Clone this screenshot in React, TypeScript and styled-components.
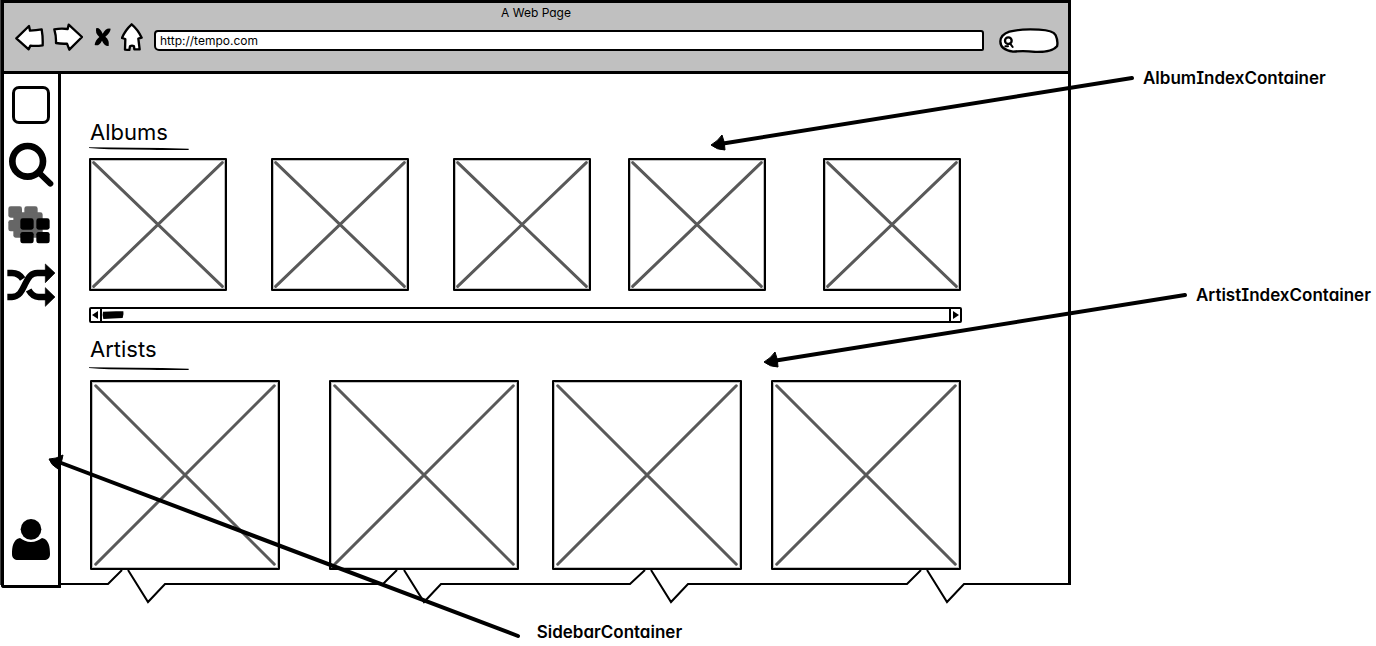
import React from "react";
import styled, { createGlobalStyle } from "styled-components";

const GlobalStyle = createGlobalStyle`
  *, *::before, *::after { box-sizing: border-box; }
  body {
    margin: 0;
    background: #fff;
    color: #000;
    font-family: Inter, "Liberation Sans", sans-serif;
    font-feature-settings: "cv11", "cv08";
  }
  button, input { font: inherit; font-feature-settings: inherit; color: inherit; }
`;

const Board = styled.div`
  position: relative;
  padding: 0 305px 61px 0;
`;

const BrowserWindow = styled.div`
  position: relative;
  border-left: 1px solid #444;
`;

const Chrome = styled.header`
  display: flex;
  flex-direction: column;
  height: 74px;
  background: #c0c0c0;
  border: 3px solid #000;
`;

const WindowTitle = styled.div`
  font-size: 12px;
  line-height: 20px;
  text-align: center;
`;

const Toolbar = styled.div`
  display: flex;
  align-items: center;
  padding: 0 9px 0 11px;
  height: 28px;
`;

const NavButtons = styled.nav`
  display: flex;
  align-items: center;
  gap: 9px;
  margin-right: 11px;
`;

const NavButton = styled.button`
  display: flex;
  padding: 0;
  border: 0;
  background: none;
`;

const AddressInput = styled.input`
  flex: 1;
  min-width: 0;
  height: 21px;
  margin-top: 7px;
  padding: 0 4px;
  border: 2px solid #000;
  border-radius: 4px 3px 2px 5px;
  background: #fff;
  font-size: 12px;
  line-height: 16px;
`;

const SearchField = styled.label`
  position: relative;
  display: flex;
  width: 60px;
  height: 25px;
  margin: 6px 0 0 15px;
`;

const SearchShape = styled.svg`
  position: absolute;
  inset: 0;
`;

const SearchInput = styled.input`
  position: relative;
  width: 100%;
  padding: 0 8px 0 16px;
  border: 0;
  background: transparent;
  font-size: 12px;
`;

const Body = styled.div`
  display: flex;
  align-items: flex-start;
`;

const Sidebar = styled.aside`
  display: flex;
  flex-direction: column;
  align-items: center;
  align-self: stretch;
  width: 60px;
  margin-bottom: -3px;
  padding: 12px 0 24px;
  border: 3px solid #000;
  border-top: 0;
  border-radius: 0 0 1px 3px;
  background: #fff;
`;

const SideButton = styled.button<{ $gap?: number; $last?: boolean }>`
  display: flex;
  padding: 0;
  border: 0;
  background: none;
  margin-top: ${(p) => (p.$last ? "auto" : `${p.$gap ?? 0}px`)};
`;

const BlankIcon = styled.span`
  width: 38px;
  height: 38px;
  border: 3px solid #000;
  border-radius: 7px;
`;

const Main = styled.main`
  flex: 1;
  min-width: 0;
  padding: 44px 107px 15px 28px;
  border-right: 3px solid #000;
`;

const Heading = styled.h2`
  margin: 0;
  padding-left: 1px;
  font-size: 22px;
  font-weight: 400;
  line-height: 28px;
`;

const Underline = styled.svg<{ $above: number; $below: number }>`
  display: block;
  margin: ${(p) => p.$above}px 0 ${(p) => p.$below}px;
`;

const CardRow = styled.div<{ $columns: string; $inset?: number }>`
  display: grid;
  grid-template-columns: ${(p) => p.$columns};
  padding-left: ${(p) => p.$inset ?? 0}px;
`;

const Card = styled.div<{ $width: number; $height: number }>`
  width: ${(p) => p.$width}px;
  height: ${(p) => p.$height}px;
  border: 2px solid #000;
  border-radius: 1px;
  background: #fff;
  outline: 1px solid rgba(0, 0, 0, 0.25);
  outline-offset: -3px;

  svg { display: block; width: 100%; height: 100%; }
`;

const Scrollbar = styled.div`
  display: flex;
  align-items: center;
  height: 16px;
  margin: 16px -1px 12px 0;
  border: 2px solid #000;
  border-radius: 2px;
`;

const ScrollButton = styled.button<{ $side: "left" | "right" }>`
  display: flex;
  align-items: center;
  justify-content: center;
  width: 11px;
  height: 12px;
  padding: 0;
  border: 0 solid #000;
  border-${(p) => (p.$side === "left" ? "right" : "left")}-width: 2px;
  background: #fff;
`;

const Track = styled.div`
  flex: 1;
  display: flex;
`;

const TornEdge = styled.svg`
  position: absolute;
  left: 60px;
  right: 0;
  bottom: -19px;
  width: calc(100% - 60px);
  height: 34px;
`;

const Arrows = styled.svg`
  position: absolute;
  inset: 0;
  width: 100%;
  height: 100%;
  pointer-events: none;
`;

const Note = styled.p<{ $left: string; $top: number }>`
  position: absolute;
  left: ${(p) => p.$left};
  top: ${(p) => p.$top}px;
  margin: 0;
  font-size: 17px;
  font-weight: 600;
  line-height: 20px;
  white-space: nowrap;
`;

const outline = {
  fill: "#fff",
  stroke: "#000",
  strokeWidth: 7,
  strokeLinejoin: "round" as const,
};

const BackIcon = () => (
  <svg width="29" height="27" viewBox="46 69 87 81">
    <path {...outline} d="M50 112 88 75 91 89 Q110 88 126 85 Q130 108 129 133 Q110 136 92 134L87 145Z" />
  </svg>
);

const ForwardIcon = () => (
  <svg width="30" height="28" viewBox="156 70 90 84">
    <path {...outline} d="M160 89 Q180 85 200 88L203 75 243 112 205 150 198 132 Q180 133 165 130Q166 110 160 89Z" />
  </svg>
);

const StopIcon = () => (
  <svg width="20" height="22" viewBox="273 74 60 66">
    <path
      d="M286 80Q297 78 305 97Q315 78 329 82Q328 94 313 106Q326 116 323 134Q311 136 303 118Q294 136 281 131Q283 116 295 107Q281 94 286 80Z"
      fill="#000"
    />
  </svg>
);

const HomeIcon = () => (
  <svg width="22" height="28" viewBox="358 68 66 84">
    <path
      {...outline}
      d="M390 72Q409 88 420 112L410 115 414 147 398 147 397 138Q391 134 385 138L383 149 370 148 371 116 361 113Q370 90 390 72Z"
    />
  </svg>
);

const MagnifierIcon = () => (
  <svg width="46" height="46" viewBox="24 200 138 138">
    <circle cx="83" cy="258" r="46" fill="none" stroke="#000" strokeWidth="20" />
    <path d="M116 291 151 325" stroke="#000" strokeWidth="18" strokeLinecap="round" />
  </svg>
);

const AlbumsIcon = () => (
  <svg width="48" height="38" viewBox="21 392 144 114">
    <g fill="#666">
      <rect x="25" y="393" width="41" height="34" rx="7" />
      <rect x="73" y="393" width="40" height="34" rx="7" />
      <rect x="25" y="434" width="41" height="34" rx="7" />
      <rect x="40" y="411" width="88" height="76" rx="7" />
    </g>
    <rect x="61" y="429" width="40" height="34" rx="7" />
    <rect x="109" y="429" width="40" height="34" rx="7" />
    <rect x="61" y="470" width="40" height="34" rx="7" />
    <rect x="109" y="470" width="40" height="34" rx="7" />
  </svg>
);

const ShuffleIcon = () => (
  <svg width="50" height="44" viewBox="18 565 150 132">
    <g fill="none" stroke="#000" strokeWidth="19">
      <path d="M22 667H36C60 667 68 643 76 627C86 606 94 595 112 595H138" />
      <path d="M22 595H36C52 595 61 602 68 613" />
      <path d="M86 646C94 660 102 667 116 667H138" />
    </g>
    <path d="M136 568 165 595 136 624ZM136 639 165 667 136 695Z" stroke="#000" strokeWidth="2" strokeLinejoin="round" />
  </svg>
);

const PersonIcon = () => (
  <svg width="40" height="43" viewBox="33 234 120 129">
    <circle cx="93" cy="268" r="31" />
    <path d="M60 294C39 298 36 322 36 342C36 354 44 360 54 360H132C143 360 150 354 150 342C150 322 147 298 126 294C117 301 106 306 93 306C80 306 69 301 60 294Z" />
  </svg>
);

const Placeholder = ({ width, height }: { width: number; height: number }) => (
  <Card $width={width} $height={height}>
    <svg viewBox="0 0 100 100" preserveAspectRatio="none" aria-hidden="true">
      <path
        d="M2 2 98 98M98 2 2 98"
        stroke="#595959"
        strokeWidth="3"
        strokeLinecap="round"
        vectorEffect="non-scaling-stroke"
      />
    </svg>
  </Card>
);

const HandLine = ({ above, below }: { above: number; below: number }) => (
  <Underline $above={above} $below={below} width="100" height="4" viewBox="0 0 300 12">
    <path d="M0 1Q70 1 140 2Q220 2 299 5V9Q230 9 180 8L60 7Q30 6 0 3Z" />
  </Underline>
);

const albums = [1, 2, 3, 4, 5];
const artists = [1, 2, 3, 4];

export default function App() {
  return (
    <Board>
      <GlobalStyle />
      <BrowserWindow>
        <Chrome>
          <WindowTitle>A Web Page</WindowTitle>
          <Toolbar>
            <NavButtons aria-label="Browser">
              <NavButton aria-label="Back"><BackIcon /></NavButton>
              <NavButton aria-label="Forward"><ForwardIcon /></NavButton>
              <NavButton aria-label="Stop"><StopIcon /></NavButton>
              <NavButton aria-label="Home"><HomeIcon /></NavButton>
            </NavButtons>
            <AddressInput aria-label="Address" defaultValue="http://tempo.com" />
            <SearchField>
              <SearchShape width="60" height="25" viewBox="0 0 180 75" aria-hidden="true">
                <path
                  {...outline}
                  d="M31 11Q65 2 120 5Q163 7 170 22Q178 40 174 55Q160 73 110 72Q75 67 42 71Q4 66 4 40Q5 20 31 11Z"
                />
                <circle cx="28" cy="38" r="10" fill="none" stroke="#000" strokeWidth="7" />
                <path d="M33 46 41 57M19 55H27" stroke="#000" strokeWidth="6" strokeLinecap="round" />
              </SearchShape>
              <SearchInput aria-label="Search" />
            </SearchField>
          </Toolbar>
        </Chrome>
        <Body>
          <Sidebar>
            <SideButton aria-label="Home"><BlankIcon /></SideButton>
            <SideButton aria-label="Search" $gap={18}><MagnifierIcon /></SideButton>
            <SideButton aria-label="Library" $gap={18}><AlbumsIcon /></SideButton>
            <SideButton aria-label="Shuffle" $gap={19}><ShuffleIcon /></SideButton>
            <SideButton aria-label="Profile" $last><PersonIcon /></SideButton>
          </Sidebar>
          <Main>
            <section>
              <Heading>Albums</Heading>
              <HandLine above={1} below={7} />
              <CardRow $columns="182fr 182fr 175fr 195fr 138px">
                {albums.map((id) => <Placeholder key={id} width={138} height={133} />)}
              </CardRow>
              <Scrollbar>
                <ScrollButton $side="left" aria-label="Scroll left">
                  <svg width="7" height="8" viewBox="0 0 7 8"><path d="M0 4 6 0V8Z" /></svg>
                </ScrollButton>
                <Track>
                  <svg width="22" height="8" viewBox="0 0 66 24">
                    <path d="M3 2Q30 0 64 1Q66 10 62 21Q30 23 4 24Q0 13 3 2Z" />
                  </svg>
                </Track>
                <ScrollButton $side="right" aria-label="Scroll right">
                  <svg width="7" height="8" viewBox="0 0 7 8"><path d="M1 0 7 4 1 8Z" /></svg>
                </ScrollButton>
              </Scrollbar>
            </section>
            <section>
              <Heading>Artists</Heading>
              <HandLine above={4} below={9} />
              <CardRow $columns="239fr 223fr 219fr 190px" $inset={1}>
                {artists.map((id) => <Placeholder key={id} width={190} height={190} />)}
              </CardRow>
            </section>
          </Main>
        </Body>
        <TornEdge viewBox="61 570 1010 34" preserveAspectRatio="none" aria-hidden="true">
          <path
            d="M60 584H108L122 570M128 570 148 602 165 584H383L397 570M404 570 424 602 441 584H630L645 570M651 570 671 602 688 584H907L921 570M927 570 947 602 964 584H1071"
            fill="none"
            stroke="#000"
            strokeWidth="2"
            vectorEffect="non-scaling-stroke"
          />
        </TornEdge>
      </BrowserWindow>
      <Arrows viewBox="0 0 1376 646" preserveAspectRatio="none" aria-hidden="true">
        <g stroke="#000" strokeWidth="4" strokeLinecap="round">
          <path d="M1132 78 720 144" />
          <path d="M1185 295 773 361" />
          <path d="M518 636 56 461" />
        </g>
        <g stroke="#000" strokeWidth="1" strokeLinejoin="round">
          <path d="M711 145Q718 141 722 135Q725 142 725 150Q717 150 711 145Z" />
          <path d="M764 362Q771 358 775 352Q778 359 778 367Q770 367 764 362Z" />
          <path d="M49 459Q56 459 63 455Q62 463 58 469Q51 465 49 459Z" />
        </g>
      </Arrows>
      <Note $left="calc(100% - 233px)" $top={68}>AlbumIndexContainer</Note>
      <Note $left="calc(100% - 180px)" $top={285}>ArtistIndexContainer</Note>
      <Note $left="39%" $top={622}>SidebarContainer</Note>
    </Board>
  );
}
